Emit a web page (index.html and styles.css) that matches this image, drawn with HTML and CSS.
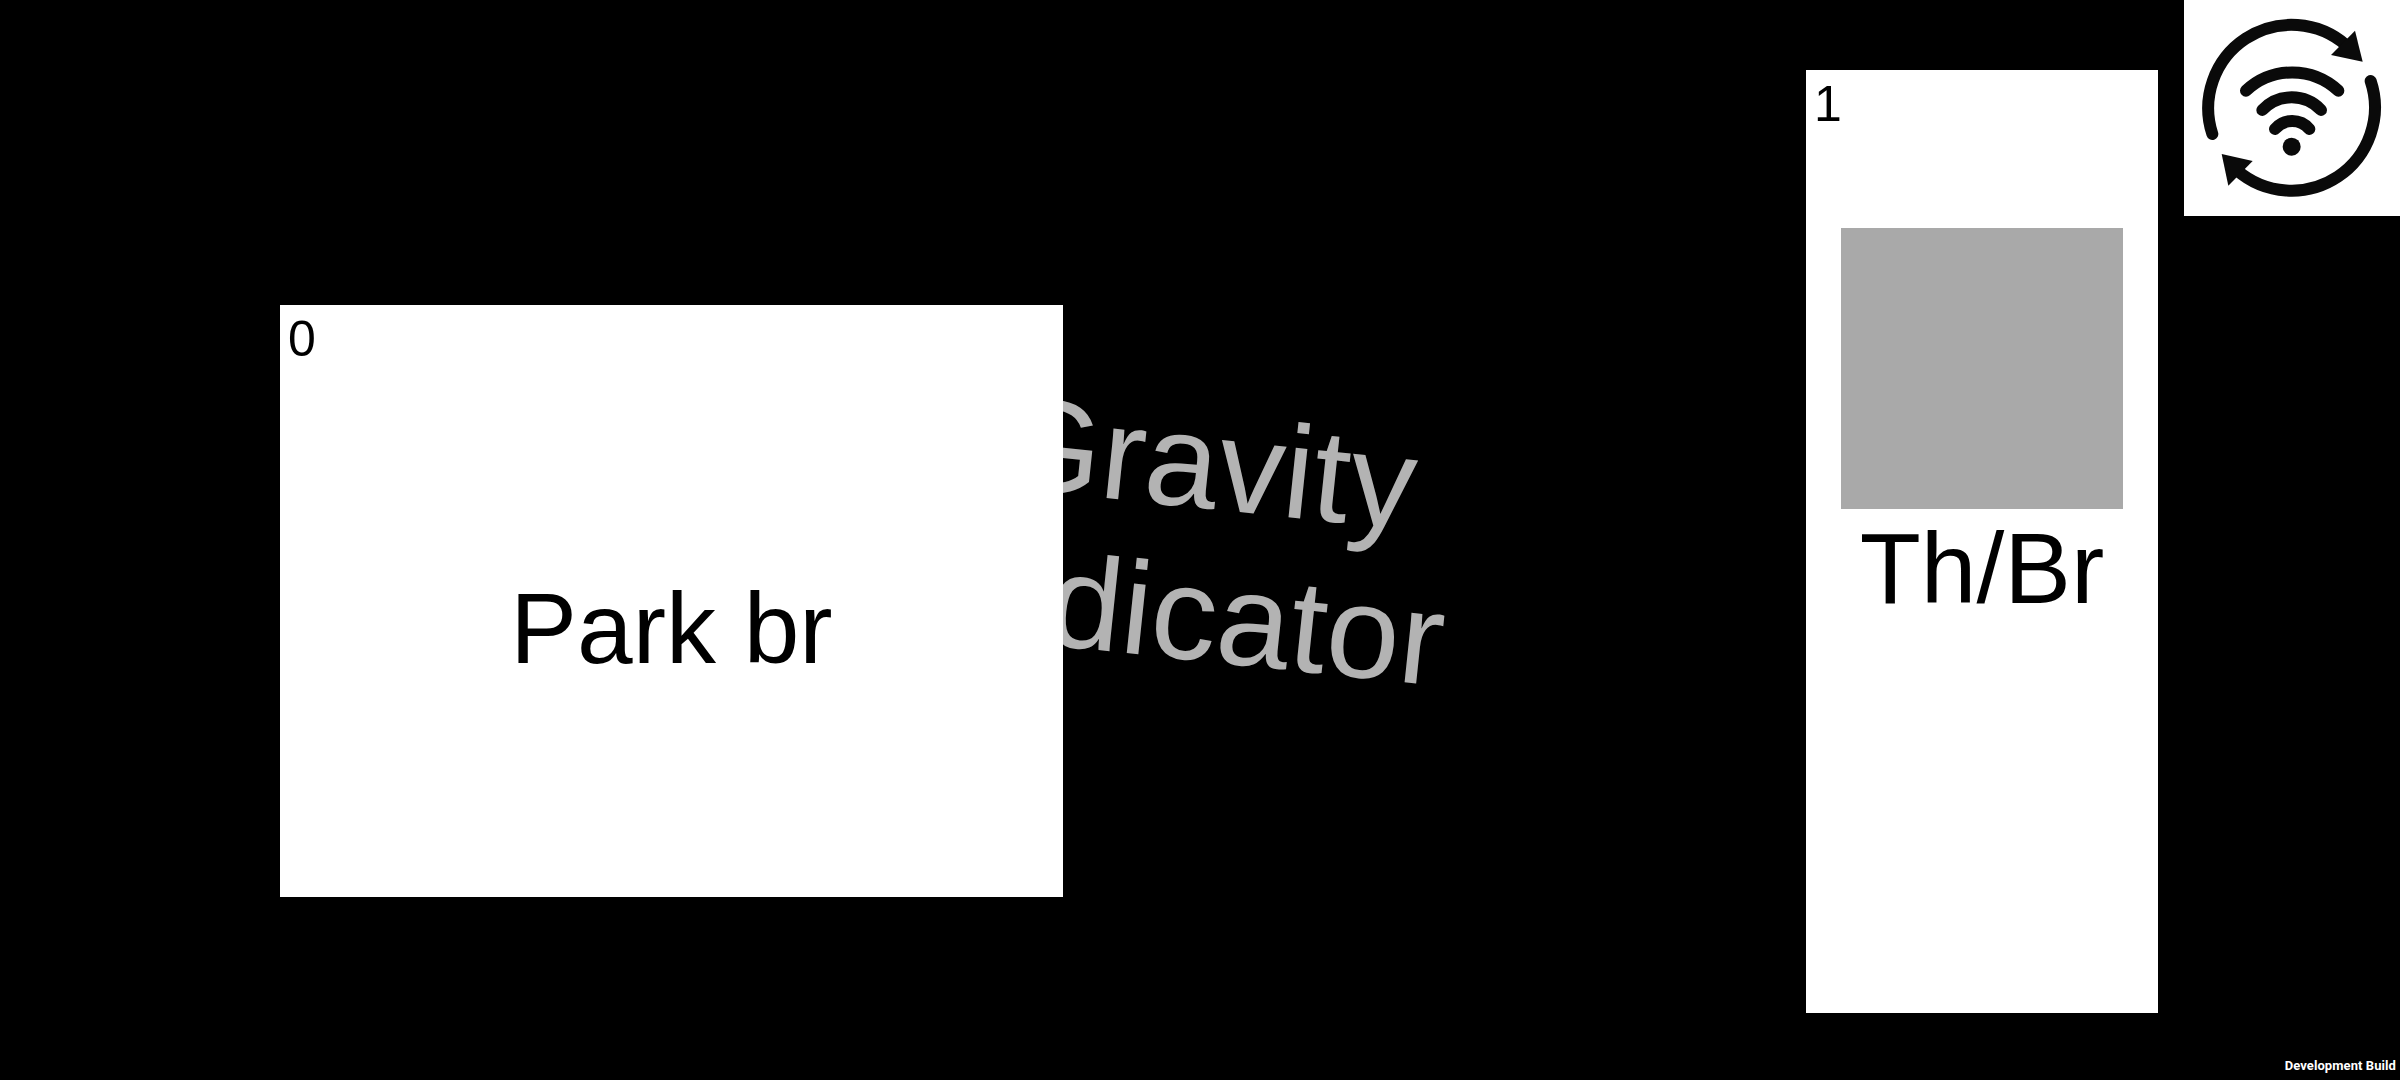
FILE: index.html
```html
<!DOCTYPE html>
<html lang="en">
<head>
<meta charset="utf-8">
<title>Gravity Indicator</title>
<link rel="stylesheet" href="styles.css">
</head>
<body>
<main class="canvas">
  <div class="gravity">Gravity<br>Indicator</div>
  <section class="panel panel-park">
    <span class="index">0</span>
    <span class="label">Park br</span>
  </section>
  <section class="panel panel-throttle">
    <span class="index">1</span>
    <div class="swatch"></div>
    <span class="label">Th/Br</span>
  </section>
  <aside class="wifi">
    <svg class="wifi-icon" viewBox="42 0 648 648" aria-hidden="true">
      <g class="strokes">
        <path d="M127 402A250 250 0 0 1 530 137"/>
        <path d="M602 243A250 250 0 0 1 200 510"/>
        <path d="M228 272A203 203 0 0 1 505 272"/>
        <path d="M277 330A121 121 0 0 1 453 330"/>
        <path d="M315 387A67 67 0 0 1 418 387"/>
      </g>
      <g class="fills">
        <path d="M555 92L578 185L483 165Z"/>
        <path d="M155 462L248 483L175 557Z"/>
        <circle cx="365" cy="440" r="27"/>
      </g>
    </svg>
  </aside>
  <div class="build">Development Build</div>
</main>
</body>
</html>
```
FILE: styles.css
```css
* { box-sizing: border-box; }
html, body { margin: 0; height: 100%; background: #000; overflow: hidden; }
.canvas {
  position: relative;
  width: 2400px;
  height: 1080px;
  background: #000;
  font-family: "Liberation Sans", Arial, sans-serif;
  color: #000;
}
.panel {
  position: absolute;
  background: #fff;
  display: flex;
  flex-direction: column;
  align-items: center;
}
.panel-park { left: 280px; top: 305px; width: 783px; height: 592px; justify-content: center; padding-top: 54px; }
.panel-throttle { left: 1806px; top: 70px; width: 352px; height: 943px; padding-top: 158px; }
.index {
  position: absolute;
  left: 8px;
  top: 5px;
  font-size: 50px;
  line-height: 58px;
}
.label { font-size: 100px; line-height: 115px; white-space: nowrap; }
.swatch { width: 282px; height: 281px; margin-bottom: 2px; background: #a9a9a9; flex: none; }
.gravity {
  position: absolute;
  left: 900px;
  top: 387px;
  width: 600px;
  font-size: 132px;
  font-kerning: none;
  line-height: 152px;
  text-align: center;
  color: #b3b3b3;
  transform: rotate(6deg);
}
.wifi { position: absolute; left: 2184px; top: 0; width: 216px; height: 216px; background: #fff; }
.wifi-icon { display: block; width: 216px; height: 216px; }
.strokes path { fill: none; stroke: #0a0a0a; stroke-width: 36; stroke-linecap: round; }
.fills { fill: #0a0a0a; }
.build {
  position: absolute;
  right: 4px;
  bottom: 7px;
  font-family: Roboto, sans-serif;
  font-weight: 700;
  font-size: 13px;
  letter-spacing: 0.08px;
  line-height: 14px;
  color: #fff;
  white-space: nowrap;
}
```
